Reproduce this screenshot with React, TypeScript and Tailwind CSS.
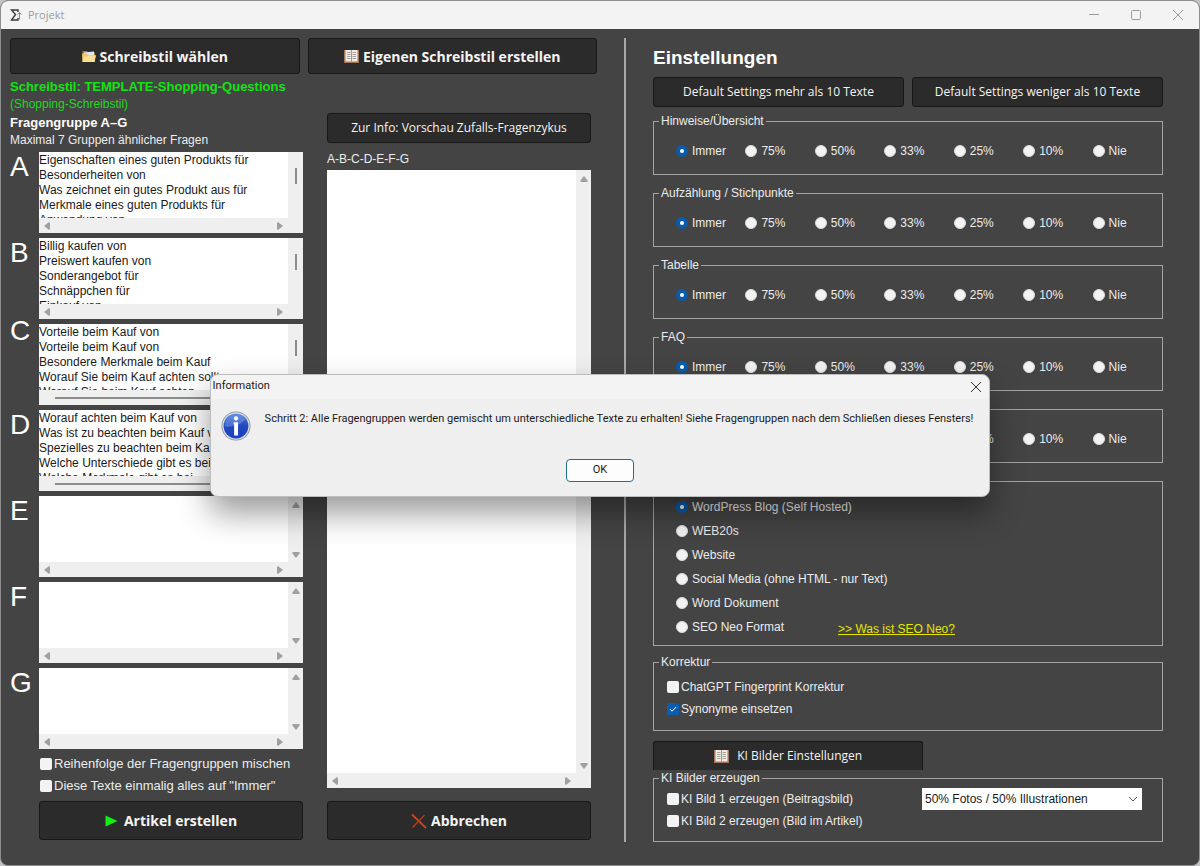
import { clsx } from 'clsx';
import type { ReactNode } from 'react';

type Group = {
  letter: string;
  lines: string[];
  vertical: 'thumb' | 'arrows';
  horizontal: 'thumb' | 'arrows';
};

const groups: Group[] = [
  {
    letter: 'A',
    lines: [
      'Eigenschaften eines guten Produkts für',
      'Besonderheiten von',
      'Was zeichnet ein gutes Produkt aus für',
      'Merkmale eines guten Produkts für',
      'Anwendung von'
    ],
    vertical: 'thumb',
    horizontal: 'arrows'
  },
  {
    letter: 'B',
    lines: [
      'Billig kaufen von',
      'Preiswert kaufen von',
      'Sonderangebot für',
      'Schnäppchen für',
      'Einkauf von'
    ],
    vertical: 'thumb',
    horizontal: 'arrows'
  },
  {
    letter: 'C',
    lines: [
      'Vorteile beim Kauf von',
      'Vorteile beim Kauf von',
      'Besondere Merkmale beim Kauf',
      'Worauf Sie beim Kauf achten sollten',
      'Worauf Sie beim Kauf achten'
    ],
    vertical: 'thumb',
    horizontal: 'thumb'
  },
  {
    letter: 'D',
    lines: [
      'Worauf achten beim Kauf von',
      'Was ist zu beachten beim Kauf von',
      'Spezielles zu beachten beim Kauf',
      'Welche Unterschiede gibt es bei',
      'Welche Merkmale gibt es bei'
    ],
    vertical: 'thumb',
    horizontal: 'thumb'
  },
  { letter: 'E', lines: [], vertical: 'arrows', horizontal: 'arrows' },
  { letter: 'F', lines: [], vertical: 'arrows', horizontal: 'arrows' },
  { letter: 'G', lines: [], vertical: 'arrows', horizontal: 'arrows' }
];

const frequencies = ['Immer', '75%', '50%', '33%', '25%', '10%', 'Nie'];

const sections = ['Hinweise/Übersicht', 'Aufzählung / Stichpunkte', 'Tabelle', 'FAQ', 'Fazit'];

const formats = [
  'WordPress Blog (Self Hosted)',
  'WEB20s',
  'Website',
  'Social Media (ohne HTML - nur Text)',
  'Word Dokument',
  'SEO Neo Format'
];

function FolderIcon() {
  return (
    <svg viewBox="0 0 14 13" className="h-[13px] w-[14px]" aria-hidden="true">
      <path d="M0.5 1h4.500l1 1.500h7V12H0.500z" fill="#a97b35" />
      <path d="M2 2.500 12 1.500V7H2z" fill="#dfe9f5" />
      <path d="M0 3.500h5l1 1.500h7.500L12.500 12H0.500z" fill="#efc566" />
      <path d="M0.500 12 2 6.500h4L7 5.500h7L12.500 12z" fill="#fbdf93" />
    </svg>
  );
}

function BookIcon() {
  return (
    <svg viewBox="0 0 15 15" className="h-[15px] w-[15px]" aria-hidden="true">
      <path d="M0 1h15v13H0z" fill="#a3755a" />
      <path d="M1.5 1h12v11.5h-12z" fill="#f0ebe4" />
      <path d="M7.5 1v12" stroke="#a79a8e" />
      <path
        d="M3 3.5h3.5M3 5.5h3.5M3 7.5h3.5M3 9.5h3.5M8.5 3.5H12M8.5 5.5H12M8.5 7.5H12M8.5 9.5H12"
        stroke="#a8a29d"
      />
    </svg>
  );
}

function InfoIcon() {
  return (
    <svg viewBox="0 0 32 32" className="h-[30px] w-[30px] shrink-0" aria-hidden="true">
      <defs>
        <linearGradient id="info" x1="0" y1="0" x2="0" y2="1">
          <stop offset="0" stopColor="#4f7bdc" />
          <stop offset="0.5" stopColor="#2349bd" />
          <stop offset="1" stopColor="#1b3fc4" />
        </linearGradient>
      </defs>
      <circle cx="16" cy="16" r="15.5" fill="#8b909c" />
      <circle cx="16" cy="16" r="14.6" fill="#d5d9e2" />
      <circle cx="16" cy="16" r="13.2" fill="url(#info)" />
      <path d="M4 17a12 12 0 0 1 22-8q-7 8-22 8z" fill="#7ea2ec" opacity="0.45" />
      <circle cx="16" cy="8" r="2.3" fill="#fff" />
      <path d="M13.500 12h4.700v14h-4.200V14h-0.500z" fill="#fff" />
    </svg>
  );
}

function Arrow({ className }: { className?: string }) {
  return (
    <svg viewBox="0 0 8 6" className={clsx('h-[6px] w-2 shrink-0', className)} aria-hidden="true">
      <path d="M4 0 8 5 7 6H1L0 5z" fill="#a0a0a0" />
    </svg>
  );
}

function ScrollBox({
  id,
  value = '',
  vertical = 'arrows',
  horizontal = 'arrows',
  className
}: {
  id: string;
  value?: string;
  vertical?: 'thumb' | 'arrows';
  horizontal?: 'thumb' | 'arrows';
  className?: string;
}) {
  return (
    <div
      className={clsx('grid min-w-0 grid-cols-[1fr_15px] grid-rows-[1fr_15px] bg-[#efefef]', className)}
    >
      <textarea
        id={id}
        wrap="off"
        defaultValue={value}
        className="h-full w-full resize-none overflow-hidden bg-white pt-px text-[12px] leading-[15px] text-[#1a1a1a] outline-none"
      />
      {vertical === 'arrows' ? (
        <div className="flex flex-col items-center justify-between pt-[6px] pb-1">
          <Arrow />
          <Arrow className="rotate-180" />
        </div>
      ) : (
        <div className="flex justify-center pt-4">
          <div className="h-4 w-[2px] bg-[#8c8c8c]" />
        </div>
      )}
      {horizontal === 'arrows' ? (
        <div className="flex items-center justify-between px-1">
          <Arrow className="-rotate-90" />
          <Arrow className="rotate-90" />
        </div>
      ) : (
        <div className="flex items-center pr-5 pl-4">
          <div className="h-[2px] flex-1 bg-[#8c8c8c]" />
        </div>
      )}
    </div>
  );
}

function DarkButton({ children, className }: { children: ReactNode; className?: string }) {
  return (
    <button
      type="button"
      className={clsx(
        "flex items-center justify-center border border-[#181818] bg-[#2b2b2b] font-['Open_Sans','Noto_Sans',sans-serif] whitespace-nowrap text-[#f4f4f4]",
        className
      )}
    >
      {children}
    </button>
  );
}

function Radio({ name, label, checked }: { name: string; label: string; checked?: boolean }) {
  return (
    <label className="flex items-center gap-1 whitespace-nowrap">
      <input
        type="radio"
        name={name}
        defaultChecked={checked}
        className="h-3 w-3 shrink-0 appearance-none rounded-full border border-[#dcdcdc] bg-[#f3f3f3] checked:border-[4px] checked:border-[#0a5cab] checked:bg-white"
      />
      {label}
    </label>
  );
}

function Checkbox({ label, checked }: { label: string; checked?: boolean }) {
  return (
    <label className="flex h-[22px] items-center gap-[2px] whitespace-nowrap">
      <span className="grid shrink-0">
        <input
          type="checkbox"
          defaultChecked={checked}
          className="peer col-start-1 row-start-1 h-3 w-3 appearance-none rounded-[2px] bg-[#f3f3f3] checked:bg-[#0a5cb0]"
        />
        <svg
          viewBox="0 0 12 12"
          className="pointer-events-none invisible col-start-1 row-start-1 h-3 w-3 peer-checked:visible"
          aria-hidden="true"
        >
          <path d="M3 6.2 5 8.2 9.2 4" stroke="#fff" fill="none" />
        </svg>
      </span>
      {label}
    </label>
  );
}

function GroupBox({
  title,
  className,
  children
}: {
  title: string;
  className?: string;
  children: ReactNode;
}) {
  return (
    <fieldset className={clsx('min-w-0 border border-[#a3a3a3]', className)}>
      <legend className="ml-[5px] px-[2px] leading-4">{title}</legend>
      {children}
    </fieldset>
  );
}

function TitleBar() {
  return (
    <header className="flex h-7 shrink-0 items-center justify-between bg-[#f3f3f3] pr-4 pl-[9px] text-[#9b9b9b]">
      <div className="flex items-center gap-[6px] font-['Open_Sans','Noto_Sans',sans-serif] text-[11px]">
        <svg viewBox="0 0 12 12" className="h-3 w-3" fill="none" aria-hidden="true">
          <path d="M8 3V1H1.500l4 4.500-4 5.500H8V9" stroke="#3a3a3a" strokeWidth="1.400" />
          <path d="M9.500 10.500V3.500M7.500 5.500l2-2 2 2" stroke="#8078d8" />
        </svg>
        Projekt
      </div>
      <div className="flex items-center gap-8">
        <button type="button" aria-label="Minimieren">
          <svg viewBox="0 0 10 10" className="h-[10px] w-[10px]" aria-hidden="true">
            <path d="M0 4.500h10" stroke="#9b9b9b" />
          </svg>
        </button>
        <button type="button" aria-label="Maximieren">
          <svg viewBox="0 0 10 10" className="h-[10px] w-[10px]" fill="none" aria-hidden="true">
            <rect x="0.500" y="0.500" width="9" height="9" rx="1" stroke="#9b9b9b" />
          </svg>
        </button>
        <button type="button" aria-label="Schließen">
          <svg viewBox="0 0 10 10" className="h-[10px] w-[10px]" aria-hidden="true">
            <path d="M0 0l10 10M10 0L0 10" stroke="#9b9b9b" />
          </svg>
        </button>
      </div>
    </header>
  );
}

function StylePanel() {
  return (
    <section className="flex min-w-0 flex-col self-start">
      <div className="grid grid-cols-2 gap-2">
        <DarkButton className="h-9 gap-1 rounded-[3px] text-[14px] font-bold">
          <FolderIcon />
          Schreibstil wählen
        </DarkButton>
        <DarkButton className="h-9 gap-1 rounded-[3px] text-[14px] font-bold">
          <BookIcon />
          Eigenen Schreibstil erstellen
        </DarkButton>
      </div>

      <div className="mt-[5px] grid grid-cols-[293fr_264fr] gap-6 pr-[6px]">
        <div className="flex min-w-0 flex-col">
          <p className="text-[13px] leading-4 font-bold whitespace-nowrap text-[#12e312]">
            Schreibstil: TEMPLATE-Shopping-Questions
          </p>
          <p className="text-[12px] leading-[18px] text-[#1fd81f]">(Shopping-Schreibstil)</p>
          <h2 className="mt-[2px] text-[13px] leading-4 font-bold text-white">Fragengruppe A–G</h2>
          <p className="text-[12px] leading-[18px]">Maximal 7 Gruppen ähnlicher Fragen</p>

          <div className="mt-[3px] flex flex-col gap-[5px]">
            {groups.map((group) => (
              <div key={group.letter} className="grid grid-cols-[29px_1fr]">
                <label
                  htmlFor={`group-${group.letter}`}
                  className={clsx(
                    'text-[28px] leading-[30px] text-white',
                    group.letter === 'C' && '-mt-2'
                  )}
                >
                  {group.letter}
                </label>
                <ScrollBox
                  id={`group-${group.letter}`}
                  value={group.lines.join('\n')}
                  vertical={group.vertical}
                  horizontal={group.horizontal}
                  className="h-[81px]"
                />
              </div>
            ))}
          </div>

          <div className="my-1 pl-[30px] text-[13px]">
            <Checkbox label="Reihenfolge der Fragengruppen mischen" />
            <Checkbox label={'Diese Texte einmalig alles auf "Immer"'} />
          </div>
          <DarkButton className="ml-[29px] h-[39px] gap-[6px] rounded-[3px] text-[14px] font-bold">
            <svg viewBox="0 0 13 12" className="h-3 w-[13px]" aria-hidden="true">
              <path d="M0.500 0.500v11L12.500 6z" fill="#11f011" />
            </svg>
            Artikel erstellen
          </DarkButton>
        </div>

        <div className="flex min-w-0 flex-col">
          <DarkButton className="mt-[34px] h-[30px] rounded-[3px] text-[12px]">
            Zur Info: Vorschau Zufalls-Fragenzykus
          </DarkButton>
          <label htmlFor="preview" className="mt-2 mb-[3px] text-[12px] leading-4">
            A-B-C-D-E-F-G
          </label>
          <ScrollBox id="preview" className="flex-1" />
          <DarkButton className="mt-[13px] h-[39px] gap-1 rounded-[3px] text-[14px] font-bold">
            <svg viewBox="0 0 16 16" className="h-4 w-4" fill="none" aria-hidden="true">
              <path d="M1 1.500 15 15" stroke="#d8401c" strokeWidth="1.800" />
              <path d="M13.500 2 1.500 14.500" stroke="#b33a1e" strokeWidth="1.400" />
            </svg>
            Abbrechen
          </DarkButton>
        </div>
      </div>
    </section>
  );
}

function SettingsPanel() {
  return (
    <section className="flex min-w-0 flex-col">
      <h1 className="mt-2 text-[19px] leading-6 font-bold text-white">Einstellungen</h1>
      <div className="mt-[7px] grid grid-cols-2 gap-2">
        <DarkButton className="h-[30px] rounded-[3px] text-[12px]">
          Default Settings mehr als 10 Texte
        </DarkButton>
        <DarkButton className="h-[30px] rounded-[3px] text-[12px]">
          Default Settings weniger als 10 Texte
        </DarkButton>
      </div>

      <div className="mt-[6px] flex flex-col gap-[10px]">
        {sections.map((title) => (
          <GroupBox key={title} title={title} className="h-[62px]">
            <div className="mt-[14px] grid grid-cols-7 pl-[22px] leading-4">
              {frequencies.map((frequency) => (
                <Radio
                  key={frequency}
                  name={title}
                  label={frequency}
                  checked={frequency === 'Immer'}
                />
              ))}
            </div>
          </GroupBox>
        ))}
      </div>

      <GroupBox title="Format" className="mt-[10px] h-[173px]">
        <div className="mt-[6px] pl-[22px]">
          {formats.map((format) => (
            <div key={format} className="flex h-6 items-center">
              <Radio name="format" label={format} checked={format === formats[0]} />
              {format === 'SEO Neo Format' && (
                <a
                  href="#seo-neo"
                  className="ml-[54px] pt-[3px] whitespace-nowrap text-[#e6e600] underline"
                >
                  &gt;&gt; Was ist SEO Neo?
                </a>
              )}
            </div>
          ))}
        </div>
      </GroupBox>

      <GroupBox title="Korrektur" className="mt-2 h-[77px]">
        <div className="mt-[6px] pl-[13px]">
          <Checkbox label="ChatGPT Fingerprint Korrektur" />
          <Checkbox label="Synonyme einsetzen" checked />
        </div>
      </GroupBox>

      <DarkButton className="mt-[10px] h-[29px] w-[53%] gap-2 rounded-t-[3px] border-b-0 text-[12px]">
        <BookIcon />
        KI Bilder Einstellungen
      </DarkButton>
      <GroupBox title="KI Bilder erzeugen" className="h-[72px]">
        <div className="mt-[2px] flex items-start justify-between pr-5 pl-[13px]">
          <div>
            <Checkbox label="KI Bild 1 erzeugen (Beitragsbild)" />
            <Checkbox label="KI Bild 2 erzeugen (Bild im Artikel)" />
          </div>
          <div className="grid w-[220px]">
            <select
              aria-label="Bildart"
              className="col-start-1 row-start-1 h-[22px] appearance-none bg-white pr-5 pl-[3px] text-[12px] text-[#1a1a1a]"
            >
              <option>50% Fotos / 50% Illustrationen</option>
            </select>
            <svg
              viewBox="0 0 10 6"
              className="pointer-events-none col-start-1 row-start-1 mr-1 h-[6px] w-[10px] self-center justify-self-end"
              fill="none"
              aria-hidden="true"
            >
              <path d="M1 1l4 4 4-4" stroke="#555" />
            </svg>
          </div>
        </div>
      </GroupBox>
    </section>
  );
}

function InfoDialog() {
  return (
    <div className="absolute inset-0 flex items-center justify-center pt-1">
      <div
        role="dialog"
        aria-labelledby="dialog-title"
        className="flex max-w-full flex-col rounded-lg border border-[#bdbdbd] bg-[#efefef] pb-[14px] font-[Roboto,'Open_Sans',sans-serif] text-[11px] text-[#1a1a1a] shadow-[0_16px_32px_rgba(0,0,0,0.4)]"
      >
        <div className="flex h-6 items-center justify-between rounded-t-lg bg-[#f3f3f3] pr-2 pl-[2px]">
          <h2 id="dialog-title">Information</h2>
          <button type="button" aria-label="Schließen">
            <svg viewBox="0 0 10 10" className="h-[10px] w-[10px]" aria-hidden="true">
              <path d="M0 0l10 10M10 0L0 10" stroke="#333" />
            </svg>
          </button>
        </div>
        <div className="mt-3 flex gap-[14px] pr-4 pl-[10px]">
          <InfoIcon />
          <p className="leading-4">
            Schritt 2: Alle Fragengruppen werden gemischt um unterschiedliche Texte zu erhalten!
            Siehe Fragengruppen nach dem Schließen dieses Fensters!
          </p>
        </div>
        <button
          type="button"
          className="mt-[18px] h-[23px] w-[68px] self-center rounded-[4px] border border-[#1d7094] bg-[#fdfdfd]"
        >
          OK
        </button>
      </div>
    </div>
  );
}

export default function App() {
  return (
    <div className="bg-[#c4c4c8]">
      <div className="relative flex min-h-screen flex-col overflow-hidden rounded-lg border border-[#8e8e8e] bg-[#444444] font-['Liberation_Sans',Arial,sans-serif] text-[12px] text-[#ececec]">
        <TitleBar />
        <main className="grid grid-cols-[587fr_2px_510fr] gap-[27px] pt-[9px] pr-9 pb-[21px] pl-[9px]">
          <StylePanel />
          <div className="bg-[#a8a8a8]" />
          <SettingsPanel />
        </main>
        <InfoDialog />
      </div>
    </div>
  );
}
